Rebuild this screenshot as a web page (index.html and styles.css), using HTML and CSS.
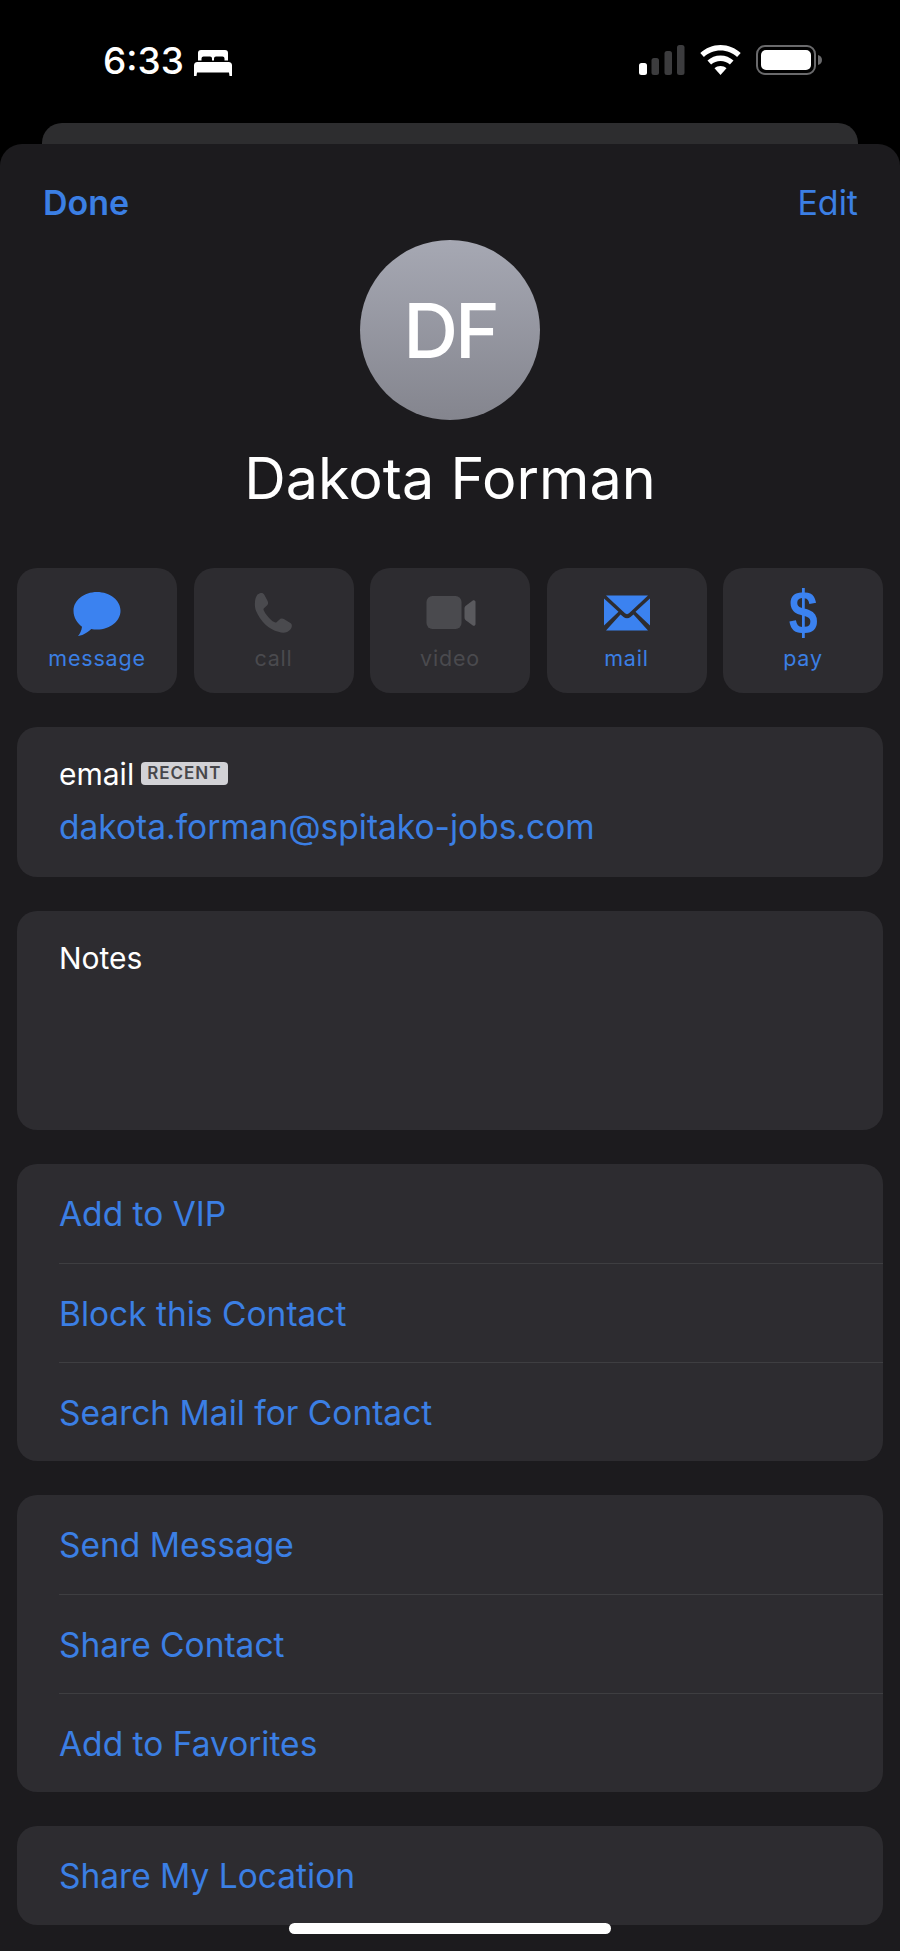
FILE: index.html
```html
<!DOCTYPE html>
<html lang="en">
<head>
<meta charset="utf-8">
<title>Dakota Forman</title>
<link rel="stylesheet" href="styles.css">
</head>
<body>
<div class="phone">
  <header class="status">
    <div class="status-left">
      <span class="time">6:33</span>
      <svg class="bed" viewBox="0 0 38 26" width="38" height="26"><path fill="#fff" fill-rule="evenodd" d="M7 0h24a3 3 0 0 1 3 3v7.500h-3.500V8.500a2 2 0 0 0-2-2h-6.500a2 2 0 0 0-2 2v2h-2v-2a2 2 0 0 0-2-2H9.500a2 2 0 0 0-2 2v2H4V3a3 3 0 0 1 3-3zM3.500 12h31A3.500 3.500 0 0 1 38 15.500V26h-2.500l-.5-3.500H3l-.5 3.500H0V15.500A3.500 3.500 0 0 1 3.500 12z"/></svg>
    </div>
    <div class="status-right">
      <svg class="signal" viewBox="0 0 46 30" width="46" height="30"><rect x="0" y="18" width="8" height="12" rx="2.500" fill="#fff"/><rect x="12.500" y="13" width="7.500" height="17" rx="2.500" fill="#3c3c3e"/><rect x="25.500" y="6" width="7.500" height="24" rx="2.500" fill="#3c3c3e"/><rect x="38" y="0" width="7.500" height="30" rx="2.500" fill="#3c3c3e"/></svg>
      <svg class="wifi" viewBox="0 0 41 30" width="41" height="30"><path fill="#fff" d="M20.500 0C28.300 0 35.400 3 40.700 8l-3.600 4C32.800 8 27 5.500 20.500 5.500S8.200 8 3.900 12L.3 8C5.600 3 12.700 0 20.500 0z"/><path fill="#fff" d="M20.500 10.500c5 0 9.500 1.900 13 5l-3.600 4c-2.500-2.200-5.800-3.500-9.400-3.500s-6.900 1.300-9.400 3.500l-3.600-4c3.500-3.100 8-5 13-5z"/><path fill="#fff" d="M20.500 21c2.300 0 4.400.8 6 2.200L20.500 30l-6-6.800c1.600-1.400 3.700-2.200 6-2.200z"/></svg>
      <svg class="battery" viewBox="0 0 66 30" width="66" height="30"><rect x="1" y="1" width="58" height="28" rx="8" fill="none" stroke="#6a6a6c" stroke-width="2"/><rect x="5" y="5" width="50" height="20" rx="5" fill="#fff"/><path fill="#6a6a6c" d="M62 10c2.500.5 4 2.500 4 5s-1.500 4.500-4 5z"/></svg>
    </div>
  </header>
  <div class="back-card"></div>
  <main class="sheet">
    <nav class="nav">
      <span class="done">Done</span>
      <span class="edit">Edit</span>
    </nav>
    <div class="avatar">DF</div>
    <h1 class="name">Dakota Forman</h1>
    <section class="actions">
      <div class="action">
        <svg class="icon" viewBox="0 -2 60 50" width="60" height="50"><path fill="#3b82f0" d="M30 3c13 0 23.500 8.300 23.500 18.700C53.500 32 43 40.500 30 40.500c-2 0-4-.2-5.800-.6-2.500 2.600-7 6-13.200 7.100 1.900-2.300 3.600-5.400 4-9.300C10 34 6.500 28.300 6.500 21.700 6.500 11.300 17 3 30 3z"/></svg>
        <span class="action-label">message</span>
      </div>
      <div class="action faint">
        <svg class="icon" viewBox="1 -1 60 50" width="60" height="50"><path fill="#4a4a4e" d="M14.500 6.500c2.500-2 5.500-2.200 6.800.2l3.300 6.300c1 2 .5 3.800-1.200 5.100l-2.200 1.800c-.8.700-.9 1.500-.4 2.600 1.800 3.900 6.600 9.400 10.300 11.600 1.100.6 1.900.6 2.700-.2l2.200-2c1.600-1.500 3.400-1.800 5.300-.6l6 3.700c2.300 1.500 2 4.400-.2 6.800-2.800 3-6.900 3.800-11.600 1.900C26 42 17.300 33 13.200 23.300c-2.100-5-1.800-12.900 1.300-16.800z"/></svg>
        <span class="action-label">call</span>
      </div>
      <div class="action faint">
        <svg class="icon" viewBox="-2 0 60 50" width="60" height="50"><rect x="4.500" y="9" width="35" height="33" rx="6" fill="#4a4a4e"/><path fill="#5a5a5e" d="M42.500 21.500c0-1.200.5-2 1.300-2.700l7-5.300c1.300-.9 2.700 0 2.700 1.500v22c0 1.500-1.400 2.400-2.700 1.500l-7-5.300c-.8-.7-1.300-1.500-1.300-2.700z"/></svg>
        <span class="action-label">video</span>
      </div>
      <div class="action">
        <svg class="icon" viewBox="0 0 60 50" width="60" height="50"><path fill="#3b82f0" d="M9 8.500h42L32 26.300c-1.200 1.100-2.800 1.100-4 0z"/><path fill="#3b82f0" d="M7 11.500v27l14.500-13.700zM53 11.500v27L38.500 24.800z"/><path fill="#3b82f0" d="M9 43.500h42L36.500 27.500 33.500 30c-2 1.700-5 1.700-7 0l-3-2.500z"/></svg>
        <span class="action-label">mail</span>
      </div>
      <div class="action">
        <span class="dollar">$</span>
        <span class="action-label">pay</span>
      </div>
    </section>
    <section class="card email">
      <div class="email-head"><span class="label">email</span><span class="badge">RECENT</span></div>
      <div class="address">dakota.forman@spitako-jobs.com</div>
    </section>
    <section class="card notes"><span class="label">Notes</span></section>
    <section class="card">
      <div class="row">Add to VIP</div>
      <div class="row">Block this Contact</div>
      <div class="row">Search Mail for Contact</div>
    </section>
    <section class="card">
      <div class="row">Send Message</div>
      <div class="row">Share Contact</div>
      <div class="row">Add to Favorites</div>
    </section>
    <section class="card">
      <div class="row">Share My Location</div>
    </section>
  </main>
  <div class="home-indicator"></div>
</div>
</body>
</html>
```
FILE: styles.css
```css
* { box-sizing: border-box; }
html, body { margin: 0; padding: 0; background: #000; }
body { font-family: Inter, "Liberation Sans", sans-serif; color: #fff; }
.phone { position: relative; width: 900px; height: 1951px; overflow: hidden; display: flex; flex-direction: column; background: #000; }

.status { height: 123px; flex: none; display: flex; justify-content: space-between; align-items: flex-start; padding: 45px 78px 0 103px; }
.status-left { display: flex; align-items: center; gap: 10px; height: 30px; margin-top: 1px; }
.time { font-size: 37px; line-height: 30px; font-weight: 500; }
.bed { margin-top: 4px; }
.status-right { display: flex; align-items: flex-start; }
.signal { margin-right: 15px; }
.wifi { margin-right: 15px; }

.back-card { height: 21px; flex: none; margin: 0 42px; background: #2d2d2f; border-radius: 20px 20px 0 0; }

.sheet { flex: 1; background: #1c1b1e; border-radius: 22px 22px 0 0; padding: 40px 17px 0; display: flex; flex-direction: column; }
.nav { display: flex; justify-content: space-between; height: 38px; padding: 0 25px 0 26px; line-height: 38px; font-size: 34px; color: #3b7fe4; flex: none; }
.done { font-weight: 600; }
.avatar { width: 180px; height: 180px; border-radius: 50%; margin: 18px auto 0; background: linear-gradient(#a6a8b3, #84858e); display: flex; align-items: center; justify-content: center; font-size: 76px; font-weight: 500; letter-spacing: -3px; flex: none; }
.name { margin: 25px 0 0; height: 67px; text-align: center; font-size: 57.500px; line-height: 67px; font-weight: 400; flex: none; }

.actions { display: grid; grid-template-columns: repeat(5, 160px); justify-content: space-between; margin-top: 56px; flex: none; }
.action { height: 125px; background: #2d2c30; border-radius: 20px; display: flex; flex-direction: column; align-items: center; padding-top: 19px; color: #3b7fe4; }
.action.faint { color: #4a4a4e; }
.icon { display: block; height: 50px; flex: none; }
.dollar { display: block; height: 50px; font-family: "Liberation Sans", sans-serif; font-size: 62px; line-height: 50px; font-weight: 700; color: #3b82f0; transform: scaleX(0.84); }
.action-label { font-size: 21.500px; line-height: 28px; letter-spacing: 0.8px; margin-top: 7px; }

.card { background: #2d2c30; border-radius: 20px; margin-top: 34px; flex: none; }
.email { height: 150px; padding: 28px 42px 0; }
.email-head { display: flex; align-items: center; gap: 7px; height: 38px; }
.label { font-size: 30px; line-height: 38px; }
.badge { background: #d2d2d6; color: #47474b; font-size: 17px; font-weight: 600; line-height: 23px; height: 23px; padding: 0 6px; border-radius: 4px; letter-spacing: 1px; margin-top: -2px; }
.address { font-size: 33.500px; line-height: 42px; margin-top: 13px; color: #3b7fe4; }
.notes { height: 219px; padding: 28px 42px 0; }
.notes .label { display: block; }

.row { height: 99px; margin-left: 42px; padding-top: 1px; display: flex; align-items: center; font-size: 33.500px; color: #3b7fe4; border-top: 1px solid #3e3e41; }
.row:first-child { border-top: none; }

.home-indicator { position: absolute; left: 289px; top: 1923px; width: 322px; height: 11px; border-radius: 6px; background: #fff; }
```
